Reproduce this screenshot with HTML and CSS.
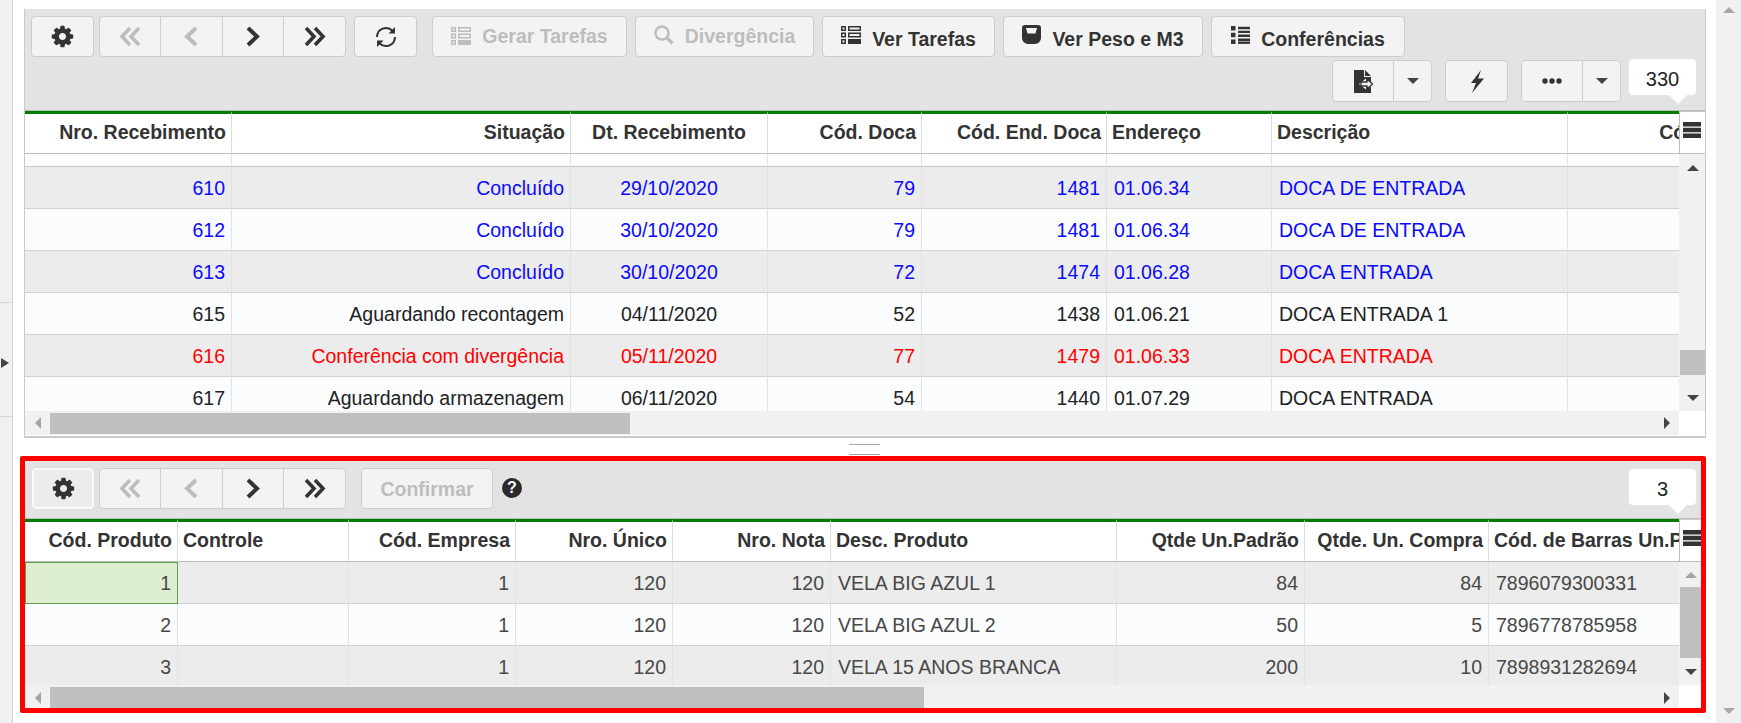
FILE: index.html
```html
<!DOCTYPE html>
<html lang="pt">
<head>
<meta charset="utf-8">
<title>Recebimento</title>
<link rel="stylesheet" href="styles.css">
</head>
<body>
<svg class="defs" width="0" height="0">
  <symbol id="i-gear" viewBox="0 0 1792 1792"><path d="M1152 896q0-106-75-181t-181-75-181 75-75 181 75 181 181 75 181-75 75-181zm512-109v222q0 12-8 23t-20 13l-185 28q-19 54-39 91 35 50 107 138 10 12 10 25t-9 23q-27 37-99 108t-94 71q-12 0-26-9l-138-108q-44 23-91 38-16 136-29 186-7 28-36 28h-222q-14 0-24.5-8.5t-11.5-21.5l-28-184q-49-16-90-37l-141 107q-10 9-25 9-14 0-25-11-126-114-165-168-7-10-7-23 0-12 8-23 15-21 51-66.5t54-70.5q-27-50-41-99l-183-27q-13-2-21-12.5t-8-23.5v-222q0-12 8-23t19-13l186-28q14-46 39-92-40-57-107-138-10-12-10-24 0-10 9-23 26-36 98.5-107.5t94.5-71.5q13 0 26 10l138 107q44-23 91-38 16-136 29-186 7-28 36-28h222q14 0 24.5 8.5t11.5 21.5l28 184q49 16 90 37l142-107q9-9 24-9 13 0 25 10 129 119 165 170 7 8 7 22 0 12-8 23-15 21-51 66.5t-54 70.5q26 50 41 98l183 28q13 2 21 12.5t8 23.5z"/></symbol>
  <symbol id="i-first" viewBox="0 0 24 21"><path d="M12 2 4 10.500 12 19M21 2 13 10.500 21 19" fill="none" stroke="currentColor" stroke-width="3.600"/></symbol>
  <symbol id="i-prev" viewBox="0 0 16 21"><path d="M13 2 4 10.500 13 19" fill="none" stroke="currentColor" stroke-width="4"/></symbol>
  <symbol id="i-next" viewBox="0 0 16 21"><path d="M3 2 12 10.500 3 19" fill="none" stroke="currentColor" stroke-width="4"/></symbol>
  <symbol id="i-last" viewBox="0 0 24 21"><path d="M3 2 11 10.500 3 19M12 2 20 10.500 12 19" fill="none" stroke="currentColor" stroke-width="3.600"/></symbol>
  <symbol id="i-refresh" viewBox="0 0 22 22"><path d="M2 11a9 9 0 0 1 15.500-6.200M20 11a9 9 0 0 1-15.500 6.200" fill="none" stroke="currentColor" stroke-width="2"/><path d="M20 1v6.500h-6.500zM2 21v-6.500h6.500z"/></symbol>
  <symbol id="i-tasks" viewBox="0 0 20 18"><path fill-rule="evenodd" d="M0 0h5v5H0zM1.500 1.500v2h2v-2zM7 0h13v5H7zM8.500 1.500v2h10v-2zM0 6.500h5v5H0zM1.500 8v2h2V8zM7 6.500h13v5H7zM8.500 8v2h10V8zM0 13h5v5H0zM1.500 14.500v2h2v-2zM7 13h13v5H7z"/></symbol>
  <symbol id="i-search" viewBox="0 0 20 20"><circle cx="8" cy="8" r="6.500" fill="none" stroke="currentColor" stroke-width="2.400"/><path d="M12.500 12.500 18.500 18.500" fill="none" stroke="currentColor" stroke-width="3.200"/></symbol>
  <symbol id="i-scale" viewBox="0 0 19 19"><path fill-rule="evenodd" d="M3 0h13a3 3 0 0 1 3 3v10a6 6 0 0 1-6 6H6a6 6 0 0 1-6-6V3a3 3 0 0 1 3-3zM4 3l1.500 5.500h8L15 3z"/></symbol>
  <symbol id="i-list" viewBox="0 0 19 18"><path d="M0 0h4.500v4.500H0zM0 6.700h4.500v4.500H0zM0 13.400h4.500v4.500H0zM7 .8h12v2.400H7zM7 4.700h12v2.400H7zM7 8.600h12V11H7zM7 12.500h12v2.400H7z"/><path d="M7 15.500h12v2.400H7z"/></symbol>
  <symbol id="i-export" viewBox="0 0 19 23"><path d="M0 0h10v7h7v5h-5V8.500L5 14l7 5.500V17h5v6H0z"/><path d="M11 0l6 6h-6z"/><path d="M7 12h6V9l5.500 5-5.500 5v-3H7z" fill="#f2f2f2" stroke="currentColor" stroke-width="1.300"/></symbol>
  <symbol id="i-bolt" viewBox="0 0 14 23"><path d="M11 0 1 13h5L2 23 14 8.500H8z"/></symbol>
  <symbol id="i-dots" viewBox="0 0 20 6"><circle cx="3" cy="3" r="2.700"/><circle cx="10" cy="3" r="2.700"/><circle cx="17" cy="3" r="2.700"/></symbol>
  <symbol id="i-menu" viewBox="0 0 18 16"><path d="M0 0h18v4.500H0zM0 5.800h18v4.400H0zM0 11.500h18V16H0z"/></symbol>
</svg>

<div class="page">
  <aside class="strip">
    <div class="strip-top"></div>
    <div class="strip-mid"><span class="tri tri-right dark-arrow"></span></div>
    <div class="strip-end"></div>
  </aside>

  <main class="main">
    <section class="panel panel-top">
      <div class="toolbar toolbar-top">
        <div class="tool-row">
          <button class="btn btn-icon"><svg class="ic ic-gear"><use href="#i-gear"/></svg></button>
          <div class="group group-nav">
            <button class="btn btn-nav off"><svg class="ic ic-dbl"><use href="#i-first"/></svg></button>
            <button class="btn btn-nav off"><svg class="ic ic-sgl"><use href="#i-prev"/></svg></button>
            <button class="btn btn-nav"><svg class="ic ic-sgl"><use href="#i-next"/></svg></button>
            <button class="btn btn-nav"><svg class="ic ic-dbl"><use href="#i-last"/></svg></button>
          </div>
          <button class="btn btn-icon btn-refresh"><svg class="ic ic-refresh"><use href="#i-refresh"/></svg></button>
          <button class="btn btn-text off w-gerar"><svg class="ic ic-tasks"><use href="#i-tasks"/></svg><span>Gerar Tarefas</span></button>
          <button class="btn btn-text off w-div"><svg class="ic ic-search"><use href="#i-search"/></svg><span>Divergência</span></button>
          <button class="btn btn-text low w-ver"><svg class="ic ic-tasks"><use href="#i-tasks"/></svg><span>Ver Tarefas</span></button>
          <button class="btn btn-text low w-peso"><svg class="ic ic-scale"><use href="#i-scale"/></svg><span>Ver Peso e M3</span></button>
          <button class="btn btn-text low w-conf"><svg class="ic ic-list"><use href="#i-list"/></svg><span>Conferências</span></button>
        </div>
        <div class="tool-row tool-row-right">
          <div class="group">
            <button class="btn btn-main"><svg class="ic ic-export"><use href="#i-export"/></svg></button>
            <button class="btn btn-caret"><span class="tri tri-down dark-arrow"></span></button>
          </div>
          <button class="btn btn-bolt"><svg class="ic ic-bolt"><use href="#i-bolt"/></svg></button>
          <div class="group">
            <button class="btn btn-more"><svg class="ic ic-dots"><use href="#i-dots"/></svg></button>
            <button class="btn btn-caret"><span class="tri tri-down dark-arrow"></span></button>
          </div>
          <div class="count count-top">330</div>
        </div>
      </div>

      <div class="grid-area">
        <div class="table-clip clip-top">
          <table class="data data-top">
            <colgroup><col><col><col><col><col><col><col><col></colgroup>
            <thead>
              <tr><th class="r">Nro. Recebimento</th><th class="r">Situação</th><th>Dt. Recebimento</th><th class="r">Cód. Doca</th><th class="r">Cód. End. Doca</th><th class="l">Endereço</th><th class="l">Descrição</th><th class="r">Cód. Parceiro</th></tr>
            </thead>
            <tbody>
              <tr class="blank odd"><td></td><td></td><td></td><td></td><td></td><td></td><td></td><td></td></tr>
              <tr class="even blue"><td class="r">610</td><td class="r">Concluído</td><td>29/10/2020</td><td class="r">79</td><td class="r">1481</td><td class="l">01.06.34</td><td class="l">DOCA DE ENTRADA</td><td></td></tr>
              <tr class="odd blue"><td class="r">612</td><td class="r">Concluído</td><td>30/10/2020</td><td class="r">79</td><td class="r">1481</td><td class="l">01.06.34</td><td class="l">DOCA DE ENTRADA</td><td></td></tr>
              <tr class="even blue"><td class="r">613</td><td class="r">Concluído</td><td>30/10/2020</td><td class="r">72</td><td class="r">1474</td><td class="l">01.06.28</td><td class="l">DOCA ENTRADA</td><td></td></tr>
              <tr class="odd"><td class="r">615</td><td class="r">Aguardando recontagem</td><td>04/11/2020</td><td class="r">52</td><td class="r">1438</td><td class="l">01.06.21</td><td class="l">DOCA ENTRADA 1</td><td></td></tr>
              <tr class="even red"><td class="r">616</td><td class="r">Conferência com divergência</td><td>05/11/2020</td><td class="r">77</td><td class="r">1479</td><td class="l">01.06.33</td><td class="l">DOCA ENTRADA</td><td></td></tr>
              <tr class="odd"><td class="r">617</td><td class="r">Aguardando armazenagem</td><td>06/11/2020</td><td class="r">54</td><td class="r">1440</td><td class="l">01.07.29</td><td class="l">DOCA ENTRADA</td><td></td></tr>
            </tbody>
          </table>
        </div>
        <div class="side side-top">
          <div class="side-head"><svg class="ic ic-menu"><use href="#i-menu"/></svg></div>
          <div class="vbar vbar-top">
            <div class="vbtn vbtn-up"><span class="tri tri-up dark-arrow"></span></div>
            <div class="vthumb"></div>
            <div class="vbtn vbtn-down"><span class="tri tri-down dark-arrow"></span></div>
          </div>
        </div>
      </div>
      <div class="hrow hrow-top">
        <div class="hbar">
          <div class="hbtn"><span class="tri tri-left gray-arrow"></span></div>
          <div class="hthumb hthumb-top"></div>
          <div class="hbtn hbtn-end"><span class="tri tri-right dark-arrow"></span></div>
        </div>
      </div>
    </section>

    <div class="splitter"><span class="grip"></span></div>

    <section class="panel panel-bottom">
      <div class="toolbar toolbar-bottom">
        <button class="btn btn-icon focus"><svg class="ic ic-gear"><use href="#i-gear"/></svg></button>
        <div class="group group-nav">
          <button class="btn btn-nav off"><svg class="ic ic-dbl"><use href="#i-first"/></svg></button>
          <button class="btn btn-nav off"><svg class="ic ic-sgl"><use href="#i-prev"/></svg></button>
          <button class="btn btn-nav"><svg class="ic ic-sgl"><use href="#i-next"/></svg></button>
          <button class="btn btn-nav"><svg class="ic ic-dbl"><use href="#i-last"/></svg></button>
        </div>
        <button class="btn btn-text off w-confirm"><span>Confirmar</span></button>
        <span class="help">?</span>
        <div class="count count-bottom">3</div>
      </div>

      <div class="grid-area">
        <div class="table-clip clip-bottom">
          <table class="data data-bottom">
            <colgroup><col><col><col><col><col><col><col><col><col></colgroup>
            <thead>
              <tr><th class="r">Cód. Produto</th><th class="l">Controle</th><th class="r">Cód. Empresa</th><th class="r">Nro. Único</th><th class="r">Nro. Nota</th><th class="l">Desc. Produto</th><th class="r">Qtde Un.Padrão</th><th class="r">Qtde. Un. Compra</th><th class="l">Cód. de Barras Un.Padrão</th></tr>
            </thead>
            <tbody>
              <tr class="even"><td class="r selected">1</td><td></td><td class="r">1</td><td class="r">120</td><td class="r">120</td><td class="l">VELA BIG AZUL 1</td><td class="r">84</td><td class="r">84</td><td class="l">7896079300331</td></tr>
              <tr class="odd"><td class="r">2</td><td></td><td class="r">1</td><td class="r">120</td><td class="r">120</td><td class="l">VELA BIG AZUL 2</td><td class="r">50</td><td class="r">5</td><td class="l">7896778785958</td></tr>
              <tr class="even"><td class="r">3</td><td></td><td class="r">1</td><td class="r">120</td><td class="r">120</td><td class="l">VELA 15 ANOS BRANCA</td><td class="r">200</td><td class="r">10</td><td class="l">7898931282694</td></tr>
            </tbody>
          </table>
        </div>
        <div class="side side-bottom">
          <div class="side-head"><svg class="ic ic-menu"><use href="#i-menu"/></svg></div>
          <div class="vbar vbar-bottom">
            <div class="vbtn vbtn-up"><span class="tri tri-up gray-arrow"></span></div>
            <div class="vthumb"></div>
            <div class="vbtn vbtn-down"><span class="tri tri-down dark-arrow"></span></div>
          </div>
        </div>
      </div>
      <div class="hrow hrow-bottom">
        <div class="hbar">
          <div class="hbtn"><span class="tri tri-left gray-arrow"></span></div>
          <div class="hthumb hthumb-bottom"></div>
          <div class="hbtn hbtn-end"><span class="tri tri-right dark-arrow"></span></div>
        </div>
      </div>
    </section>
  </main>

  <aside class="pagebar">
    <span class="tri tri-up pale-arrow"></span>
    <span class="tri tri-down pale-arrow"></span>
  </aside>
</div>
</body>
</html>
```

FILE: styles.css
```css
* { box-sizing: border-box; }
html, body { margin: 0; height: 723px; overflow: hidden; background: #fff; }
body { font-family: "Liberation Sans", Arial, sans-serif; font-size: 19.5px; color: #333; }
.defs { position: absolute; }

.page { display: flex; height: 723px; }

/* left collapsed strip */
.strip { width: 13px; flex: none; display: flex; flex-direction: column; background: #f0f0f0; border-right: 1px solid #d2d2d2; }
.strip-top { height: 303px; border-bottom: 1px solid #d6d6d6; }
.strip-mid { height: 114px; border-bottom: 1px solid #d6d6d6; display: flex; align-items: center; padding: 6px 0 0 1px; }
.strip-end { flex: 1; }
.strip .tri-right { border-width: 5px 0 5px 8px; }

/* triangles */
.tri { display: block; width: 0; height: 0; border-style: solid; border-color: transparent; }
.tri-up { border-width: 0 6px 6px; border-bottom-color: currentColor; }
.tri-down { border-width: 6px 6px 0; border-top-color: currentColor; }
.tri-left { border-width: 6px 6px 6px 0; border-right-color: currentColor; }
.tri-right { border-width: 6px 0 6px 6px; border-left-color: currentColor; }
.strip .tri-right { border-width: 5px 0 5px 8px; }
.dark-arrow { color: #444; }
.gray-arrow { color: #a4a4a4; }
.pale-arrow { color: #a8a8a8; }

/* main column */
.main { width: 1703px; flex: none; padding: 9px 10px 0 11px; display: flex; flex-direction: column; }
.panel-top { height: 429px; border: 1px solid #c6cacc; border-top: 0; border-bottom-width: 2px; background: #fff; }
.splitter { height: 18px; display: flex; justify-content: center; padding: 6px 0 0 0; }
.grip { width: 31px; height: 11px; border-top: 1px solid #a6a6a6; border-bottom: 1px solid #a6a6a6; margin-left: -1px; }
.panel-bottom { height: 257px; margin-left: -4px; border: 5px solid #ff0000; border-radius: 2px; background: #fff; }

/* toolbars */
.toolbar { background: #e3e3e3; border-bottom: 1px solid #bdbdbd; }
.toolbar-top { height: 102px; padding: 7px 8px 0 6px; }
.toolbar-bottom { height: 58px; padding: 7px 4px 0 7px; display: flex; align-items: flex-start; }
.tool-row { display: flex; align-items: flex-start; }
.tool-row-right { justify-content: flex-end; margin-top: 3px; }

.btn { height: 41px; padding: 0; border: 1px solid #cdcdcd; border-radius: 4px; background: #f3f3f3; color: #333; font: bold 19.5px "Liberation Sans", Arial, sans-serif; display: flex; align-items: center; justify-content: center; }
.btn.off { color: #bdbdbd; }
.btn-icon { width: 63px; }
.btn-icon.focus { width: 62px; border: 2px solid #fafafa; background: #ececec; box-shadow: 0 0 1px #bbb; margin-right: -1px; }
.btn-refresh { margin-left: 8px; }
.group { display: flex; }
.group-nav { margin-left: 5px; }
.group .btn { border-radius: 0; margin-left: -1px; }
.group .btn:first-child { border-radius: 4px 0 0 4px; margin-left: 0; }
.group .btn:last-child { border-radius: 0 4px 4px 0; }
.btn-nav { width: 62.500px; }
.btn-nav:first-child { width: 62px; }
.btn-nav:last-child { width: 63px; }
.toolbar-bottom .group-nav { margin-left: 6px; }

.btn-text { gap: 11px; margin-left: 8px; }
.btn-text.low span { position: relative; top: 3px; }
.btn-text .ic { position: relative; top: -2px; }
.w-gerar { width: 195px; margin-left: 15px; }
.w-gerar .ic { top: -1px; }
.w-div { width: 179px; }
.w-ver { width: 173px; }
.w-peso { width: 200px; }
.w-conf { width: 194px; }
.w-confirm { width: 132px; margin-left: 15px; }
.w-confirm span { position: relative; top: 1px; }

.btn-main { width: 62px; height: 42px; }
.btn-caret { width: 39px; height: 42px; }
.btn-more { width: 62px; height: 42px; }
.btn-bolt { width: 63px; height: 42px; margin: 0 13px; }

.ic { display: block; flex: none; fill: currentColor; }
.ic-gear { width: 25px; height: 25px; }
.ic-dbl { width: 24px; height: 21px; }
.ic-sgl { width: 16px; height: 21px; }
.ic-refresh { width: 22px; height: 22px; }
.ic-tasks { width: 20px; height: 18px; }
.ic-search { width: 20px; height: 20px; }
.ic-scale { width: 19px; height: 19px; }
.ic-list { width: 19px; height: 18px; }
.ic-export { width: 19px; height: 23px; }
.ic-bolt { width: 14px; height: 23px; }
.ic-dots { width: 20px; height: 6px; }
.ic-menu { width: 18px; height: 16px; }

.count { width: 69px; height: 38px; padding-top: 5px; background: #fff; border: 1px solid #e6e6e6; border-radius: 5px; color: #222; font-size: 20px; display: flex; align-items: center; justify-content: center; position: relative; flex: none; }
.count::after { content: ""; position: absolute; right: 9px; bottom: -9px; width: 0; height: 0; border-style: solid; border-width: 9px 9px 0; border-color: #fff transparent transparent; }
.count-top { margin: -2px 0 0 7px; }
.count-bottom { margin-left: auto; }

.help { width: 20px; height: 20px; margin: 10px 0 0 9px; border-radius: 50%; background: #2b2b2b; color: #fff; font-size: 16px; font-weight: bold; line-height: 20px; text-align: center; }

/* grids */
.grid-area { display: flex; }
.table-clip { width: 1654px; overflow: hidden; flex: none; background: #fbfcfe; }
.clip-top { height: 300px; }
.clip-bottom { height: 166px; }

.data { border-collapse: separate; border-spacing: 0; table-layout: fixed; }
.data-top { width: 1767px; }
.data-bottom { width: 1714px; }
.data-top col:nth-child(1) { width: 207px; }
.data-top col:nth-child(2) { width: 339px; }
.data-top col:nth-child(3) { width: 197px; }
.data-top col:nth-child(4) { width: 154px; }
.data-top col:nth-child(5) { width: 185px; }
.data-top col:nth-child(6) { width: 165px; }
.data-top col:nth-child(7) { width: 296px; }
.data-top col:nth-child(8) { width: 224px; }
.data-bottom col:nth-child(1) { width: 153px; }
.data-bottom col:nth-child(2) { width: 171px; }
.data-bottom col:nth-child(3) { width: 167px; }
.data-bottom col:nth-child(4) { width: 157px; }
.data-bottom col:nth-child(5) { width: 158px; }
.data-bottom col:nth-child(6) { width: 286px; }
.data-bottom col:nth-child(7) { width: 188px; }
.data-bottom col:nth-child(8) { width: 184px; }
.data-bottom col:nth-child(9) { width: 250px; }

.data th { height: 43px; padding: 0 5px 3px; border-top: 3px solid #007d00; border-bottom: 1px solid #bcbcbc; border-right: 1px solid #dcdcdc; background: #fff; color: #333; font-size: 19.5px; font-weight: bold; text-align: center; white-space: nowrap; overflow: hidden; }
.data td { height: 42px; padding: 1px 6px 0; border-bottom: 1px solid #d0d2d4; border-right: 1px solid #e2e2e2; font-size: 19.5px; text-align: center; white-space: nowrap; overflow: hidden; }
.data .r { text-align: right; }
.data .l { text-align: left; }
.data td.l { padding-left: 7px; }
.data tr.blank td { height: 13px; padding: 0; border-bottom-color: #c8c8c8; }
.even td { background: #ececec; }
.odd td { background: #fbfcfe; }
.data-top td { color: #222; }
.data-bottom td { color: #484848; }
.data-top .blue td { color: #0a0aff; }
.data-top .red td { color: #ff0000; }
.data .selected { background: #deeed0; border: 1px solid #5c9c4c; color: #484848; }

/* side column: grid menu + vertical scrollbar */
.side { flex: 1; min-width: 0; display: flex; flex-direction: column; background: #fff; }
.side-head { height: 43px; flex: none; border-left: 1px solid #bcbcbc; border-top: 1px solid #bcbcbc; border-bottom: 1px solid #bcbcbc; padding: 10px 0 0 3px; }
.side-top .side-head { border-top-color: #c6c6c6; }
.side-bottom .side-head { border-top-color: #cfcfcf; }
.vbar { flex: 1; background: #f1f1f1; display: flex; flex-direction: column; padding-left: 1px; }
.vbtn { display: flex; justify-content: center; align-items: center; flex: none; }
.vbtn-up { height: 27px; }
.vbtn-down { height: 26px; margin-top: auto; }
.vthumb { background: #bfbfbf; margin-left: 0; flex: none; }
.vbar-top .vthumb { height: 25px; margin-top: 169px; }
.vbar-bottom .vbtn-up { height: 25px; }
.vbar-bottom .vthumb { height: 71px; }

/* horizontal scrollbar */
.hrow { display: flex; background: #fff; }
.hbar { width: 1654px; flex: none; background: #f1f1f1; display: flex; align-items: center; }
.hrow-top .hbar { height: 24px; }
.hrow-bottom .hbar { height: 23px; padding-top: 2px; }
.hbtn { width: 25px; flex: none; display: flex; justify-content: center; }
.hbtn-end { margin-left: auto; }
.hthumb { background: #bfbfbf; flex: none; height: 21px; }
.hthumb-top { width: 580px; }
.hthumb-bottom { width: 874px; }

/* page scrollbar */
.pagebar { width: 25px; flex: none; background: #f1f1f1; display: flex; flex-direction: column; justify-content: space-between; align-items: center; padding: 7px 0 9px; }
```
